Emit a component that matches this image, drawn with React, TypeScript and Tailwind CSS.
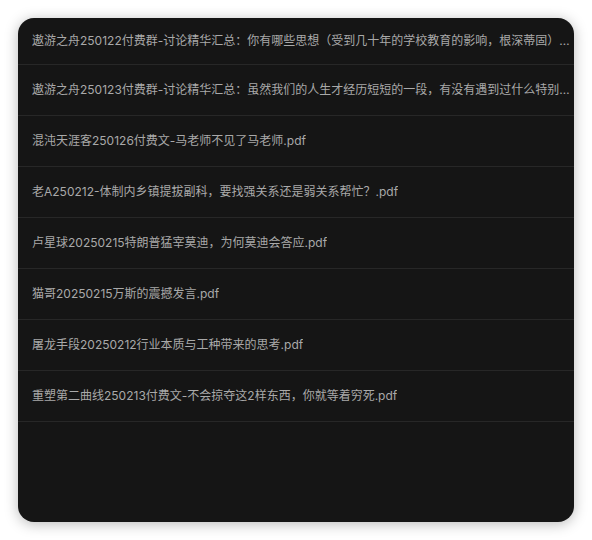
import React from "react";

const items = [
  "遨游之舟250122付费群-讨论精华汇总：你有哪些思想（受到几十年的学校教育的影响，根深蒂固）在接触了社会、步入职场之后被颠覆了？.pdf",
  "遨游之舟250123付费群-讨论精华汇总：虽然我们的人生才经历短短的一段，有没有遇到过什么特别震撼的事情？.pdf",
  "混沌天涯客250126付费文-马老师不见了马老师.pdf",
  "老A250212-体制内乡镇提拔副科，要找强关系还是弱关系帮忙？.pdf",
  "卢星球20250215特朗普猛宰莫迪，为何莫迪会答应.pdf",
  "猫哥20250215万斯的震撼发言.pdf",
  "屠龙手段20250212行业本质与工种带来的思考.pdf",
  "重塑第二曲线250213付费文-不会掠夺这2样东西，你就等着穷死.pdf",
];

export default function App() {
  return (
    <div className="w-[592px] h-[540px] bg-white pt-[18px] pl-[18px]">
      <div
        className="w-[556px] h-[504px] bg-[#151515] rounded-[16px] overflow-hidden shadow-[0_2px_14px_rgba(0,0,0,0.28)]"
        style={{ fontFamily: '"Inter", "Noto Sans CJK SC", sans-serif' }}
      >
        {items.map((t, i) => (
          <div
            key={i}
            className={`flex items-center border-b border-[#272727] pl-[14px] pr-[4px] ${i === 0 ? "h-[47px]" : "h-[51px]"}`}
          >
            <span className="block truncate text-[12px] leading-[16px] text-[#a9a9a9]">{t}</span>
          </div>
        ))}
      </div>
    </div>
  );
}
